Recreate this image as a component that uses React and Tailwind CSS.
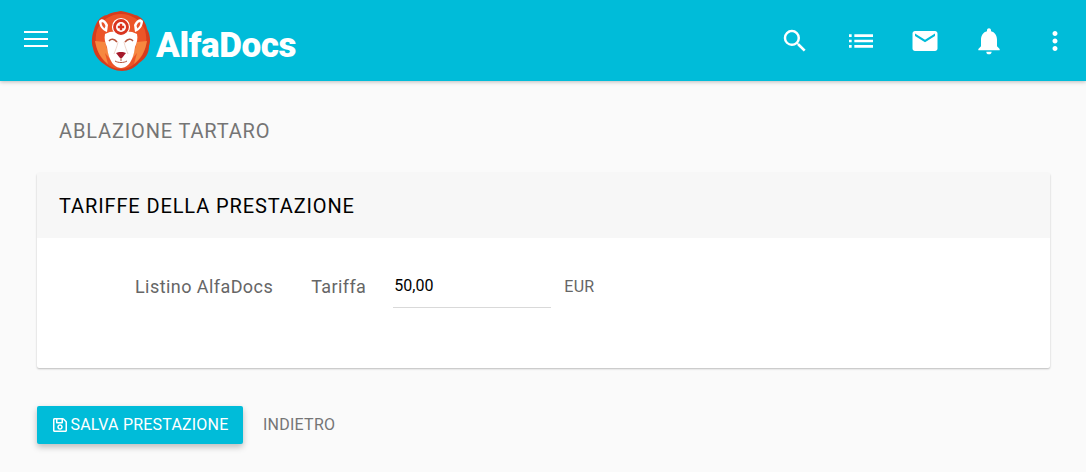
import React from 'react';
import { MdSearch, MdList, MdMail, MdNotifications, MdMoreVert } from 'react-icons/md';
import { FaRegSave } from 'react-icons/fa';

// Hamburger sottile, piu' fine di quello di Material
const MenuIcon = () => (
  <svg width="24" height="16" viewBox="0 0 24 16" fill="#fff" className="shrink-0">
    <rect x="0" y="0" width="24" height="2" />
    <rect x="0" y="7" width="24" height="2" />
    <rect x="0" y="14" width="24" height="2" />
  </svg>
);

// Logo AlfaDocs: testa di leone con croce medica
const LionLogo = () => (
  <svg width="60" height="60" viewBox="0 0 60 60" className="shrink-0">
    <path d="M30 0 C35 1 40 2 44 4 C50 5 55 11 56 18 C59 23 60 30 58 35 C58 43 54 48 48 52 C44 57 37 60 31 60 C24 60 18 57 13 53 C7 49 3 43 2 37 C0 31 1 24 3 19 C5 11 9 5 16 4 C21 1 25 1 30 0 Z" fill="#d63c1d" />
    <path d="M30 3 C40 3 50 9 54 19 C57 30 55 42 47 50 C42 55 36 58 30 58 C23 58 17 55 12 49 C5 41 3 29 6 19 C10 9 20 3 30 3 Z" fill="#ec5528" />
    <path d="M4 30 C6 41 10 47 17 53 L14 42 L19 48 L14 31 Z M56 30 C54 41 50 47 43 53 L46 42 L41 48 L46 31 Z" fill="#f6873f" />
    <path d="M8 10 C11 6 15 9 17 14 L16 21 C11 19 8 15 8 10 Z" fill="#fff" />
    <path d="M52 10 C49 6 45 9 43 14 L44 21 C49 19 52 15 52 10 Z" fill="#fff" />
    <path d="M10.5 11.5 C12 10.5 13.5 12 14.5 15 L13.5 17.5 C12 16 10.5 14 10.5 11.5 Z M49.5 11.5 C48 10.5 46.5 12 45.5 15 L46.5 17.5 C48 16 49.5 14 49.5 11.5 Z" fill="#e8552c" />
    <path d="M14 23 C19 20 24 20 30 21 C36 20 41 20 46 23 C47 27 46 32 44 36 C43 44 41 49 38 53 C35 56 32 57 30 57 C28 57 25 56 22 53 C19 49 17 44 16 36 C14 32 13 27 14 23 Z" fill="#fff" />
    <circle cx="30" cy="16" r="8.5" fill="#d9341f" stroke="#fff" strokeWidth="1.2" />
    <circle cx="30" cy="16" r="5" fill="#fff" />
    <path d="M28.8 12.8 h2.4 v2 h2 v2.4 h-2 v2 h-2.4 v-2 h-2 v-2.4 h2 Z" fill="#d9341f" />
    <path d="M18 30 C20 27.5 23 27.5 26 31 M42 30 C40 27.5 37 27.5 34 31" stroke="#b5543c" strokeWidth="1.6" fill="none" />
    <path d="M27 31 C26 36 24 40 23 43 M33 31 C34 36 36 40 37 43" stroke="#f0d6cc" strokeWidth="1" fill="none" />
    <path d="M25 42 C27 40.5 33 40.5 35 42 L31 47 H29 Z" fill="#a51a2b" />
    <path d="M30 47 V50 M24 50 C27 52 33 52 36 50" stroke="#b5543c" strokeWidth="1" fill="none" />
  </svg>
);

export default function App() {
  return (
    <div className="h-[472px] w-[1086px] overflow-hidden bg-[#fafafa] font-['Roboto',sans-serif]">
      {/* Barra superiore */}
      <header className="flex h-[81px] items-center bg-[#00bcd9] pl-[24px] pr-[16px] text-white shadow-[0_1px_4px_rgba(0,0,0,0.25)]">
        <div className="-mt-[4px]">
          <MenuIcon />
        </div>
        <div className="ml-[43px] flex items-center">
          <LionLogo />
          <span className="ml-[5px] pt-[9px] text-[35px] font-black leading-none tracking-[-0.4px] text-white">AlfaDocs</span>
        </div>
        <div className="ml-auto flex items-center">
          <MdSearch size={30} />
          <MdList size={32} className="ml-[35px]" />
          <MdMail size={30} className="ml-[33px]" />
          <MdNotifications size={32} className="ml-[33px]" />
          <MdMoreVert size={30} className="ml-[35px]" />
        </div>
      </header>

      <main className="px-[37px]">
        <h1 className="pl-[22px] pt-[37px] text-[20px] leading-[26px] tracking-[0.85px] text-[#757575]">ABLAZIONE TARTARO</h1>

        {/* Card tariffe */}
        <section className="mt-[29px] h-[195px] w-[1013px] rounded-[2px] bg-white shadow-[0_1px_2px_rgba(0,0,0,0.25)]">
          <div className="flex h-[65px] items-center bg-[#f7f7f7] pl-[22px] text-[20px] tracking-[0.88px] text-black">
            TARIFFE DELLA PRESTAZIONE
          </div>
          <div className="flex items-start pl-[98px] pt-[33px] text-[18px] leading-[32px] text-[#666666]">
            <span className="tracking-[0.43px]">Listino AlfaDocs</span>
            <span className="ml-[38px] tracking-[0.4px]">Tariffa</span>
            <div className="ml-[27px] h-[37px] w-[158px] border-b border-[#d9d9d9] pl-[1px] text-[16px] leading-[30px] text-black">
              50,00
            </div>
            <span className="ml-[13px] text-[16px] leading-[32px] tracking-[0.3px]">EUR</span>
          </div>
        </section>

        {/* Azioni */}
        <div className="mt-[38px] flex items-center">
          <button className="flex h-[38px] w-[206px] items-center justify-center gap-[3px] rounded-[2px] bg-[#00bcd9] text-[16px] tracking-[0.2px] text-white shadow-[0_3px_6px_rgba(0,0,0,0.25)]">
            <FaRegSave size={16} />
            SALVA PRESTAZIONE
          </button>
          <span className="ml-[20px] text-[16px] tracking-[0.25px] text-[#757575]">INDIETRO</span>
        </div>
      </main>
    </div>
  );
}
